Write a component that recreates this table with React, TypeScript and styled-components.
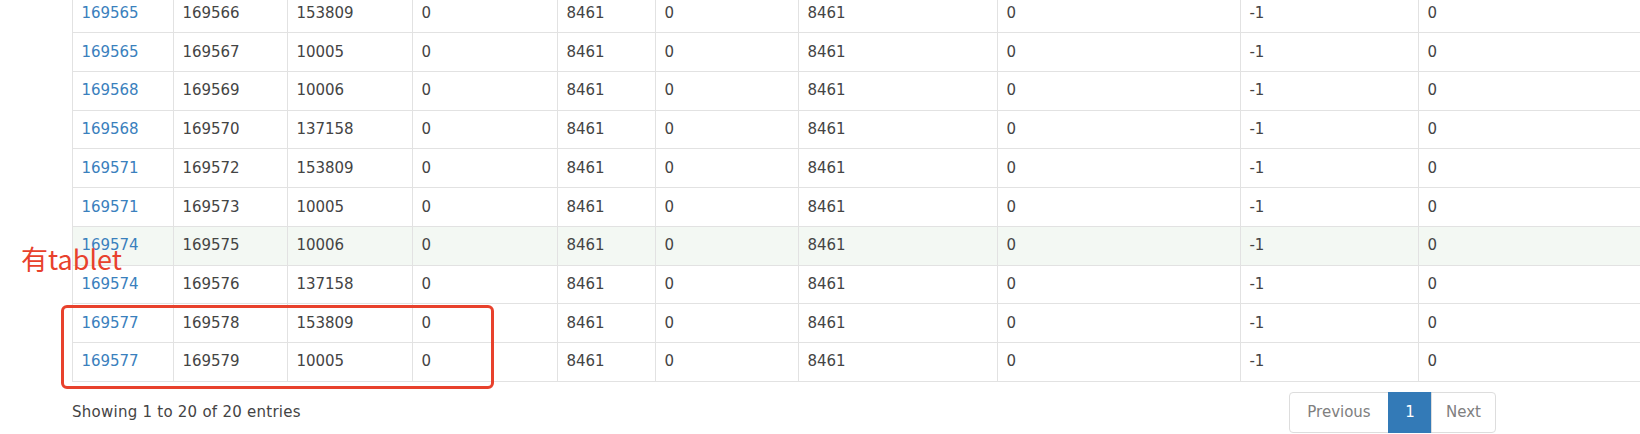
import React from 'react';
import styled, { createGlobalStyle } from 'styled-components';

const GlobalStyle = createGlobalStyle`
  html, body {
    margin: 0;
    padding: 0;
    background: #fff;
    overflow: hidden;
  }
  body {
    font-family: "DejaVu Sans", "Liberation Sans", sans-serif;
    color: #333;
  }
`;

const Page = styled.div`
  position: relative;
  width: 1640px;
  height: 434px;
  overflow: hidden;
`;

const Wrapper = styled.div`
  margin-left: 72px;
  margin-top: -6.3px;
`;

const Table = styled.table`
  table-layout: fixed;
  border-collapse: collapse;
  width: 1646px;
  font-size: 15px;
  line-height: 20.9px;
`;

const Row = styled.tr<{ hover?: boolean }>`
  background: ${props => (props.hover ? '#f3f8f3' : '#fff')};
`;

const Cell = styled.td`
  padding: 8.4px 8.4px;
  border: 1px solid #e2e2e2;
  white-space: nowrap;
  overflow: hidden;
  color: #444;
`;

const IdLink = styled.a`
  color: #3a80bd;
  text-decoration: none;
`;

const Footer = styled.div`
  display: flex;
  justify-content: space-between;
  align-items: center;
  width: 1424px;
  margin-top: 10.3px;
`;

const Info = styled.div`
  font-size: 15px;
  line-height: 20.9px;
  color: #444;
  letter-spacing: 0.25px;
  padding-top: 1px;
`;

const Pagination = styled.ul`
  display: flex;
  list-style: none;
  margin: 0;
  padding: 0;
`;

const PageItem = styled.li<{ w: number; active?: boolean }>`
  box-sizing: border-box;
  width: ${props => props.w}px;
  height: 41px;
  line-height: 39px;
  text-align: center;
  font-size: 15px;
  border: 1px solid ${props => (props.active ? '#337ab7' : '#ddd')};
  margin-left: -1px;
  background: ${props => (props.active ? '#337ab7' : '#fff')};
  color: ${props => (props.active ? '#fff' : '#808080')};

  &:first-child {
    margin-left: 0;
    border-radius: 4px 0 0 4px;
  }
  &:last-child {
    border-radius: 0 4px 4px 0;
  }
`;

const Highlight = styled.div`
  position: absolute;
  left: 61px;
  top: 305px;
  width: 433px;
  height: 84px;
  box-sizing: border-box;
  border: 3px solid #e8412c;
  border-radius: 6px;
  pointer-events: none;
`;

const Note = styled.div`
  position: absolute;
  left: 21px;
  top: 245px;
  font-family: "Noto Sans CJK SC", "Microsoft YaHei", sans-serif;
  font-size: 27px;
  line-height: 27px;
  color: #e8412c;
  white-space: nowrap;
`;

const colWidths = [101, 114, 125, 145, 98, 143, 199, 243, 178, 300];

const rows: [string, string, string][] = [
  ['169565', '169566', '153809'],
  ['169565', '169567', '10005'],
  ['169568', '169569', '10006'],
  ['169568', '169570', '137158'],
  ['169571', '169572', '153809'],
  ['169571', '169573', '10005'],
  ['169574', '169575', '10006'],
  ['169574', '169576', '137158'],
  ['169577', '169578', '153809'],
  ['169577', '169579', '10005'],
];

export default function App() {
  return (
    <Page>
      <GlobalStyle />
      <Wrapper>
        <Table>
          <colgroup>
            {colWidths.map((w, i) => (
              <col key={i} style={{ width: w }} />
            ))}
          </colgroup>
          <tbody>
            {rows.map(([a, b, c], i) => (
              <Row key={b} hover={i === 6}>
                <Cell>
                  <IdLink href="#">{a}</IdLink>
                </Cell>
                <Cell>{b}</Cell>
                <Cell>{c}</Cell>
                <Cell>0</Cell>
                <Cell>8461</Cell>
                <Cell>0</Cell>
                <Cell>8461</Cell>
                <Cell>0</Cell>
                <Cell>-1</Cell>
                <Cell>0</Cell>
              </Row>
            ))}
          </tbody>
        </Table>
        <Footer>
          <Info>Showing 1 to 20 of 20 entries</Info>
          <Pagination>
            <PageItem w={100}>Previous</PageItem>
            <PageItem w={44} active>1</PageItem>
            <PageItem w={65}>Next</PageItem>
          </Pagination>
        </Footer>
      </Wrapper>
      <Note>有tablet</Note>
      <Highlight />
    </Page>
  );
}
